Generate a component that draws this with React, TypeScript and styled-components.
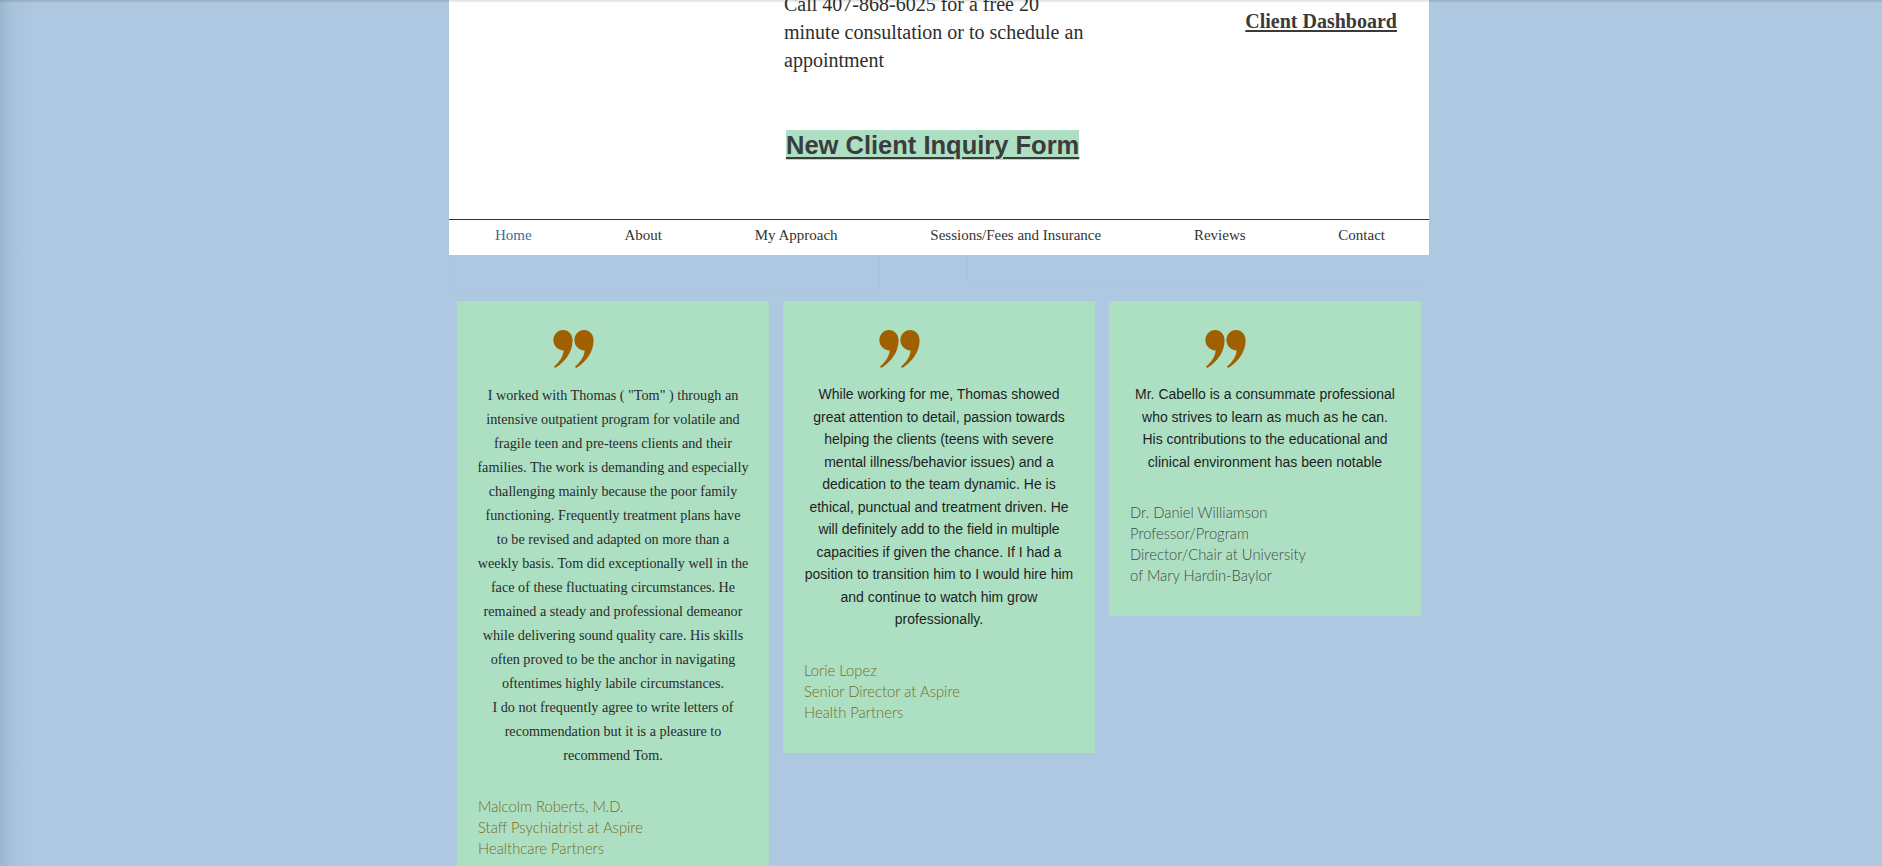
import React from 'react';
import styled, { createGlobalStyle } from 'styled-components';

const GlobalStyle = createGlobalStyle`
    html, body {
        margin: 0;
        padding: 0;
        overflow: hidden;
    }
    body {
        background: #adc8e0;
        font-family: "Liberation Serif", serif;
    }
`;

const navItems = ['Home', 'About', 'My Approach', 'Sessions/Fees and Insurance', 'Reviews', 'Contact'];

type Testimonial = {
    quote: string;
    signature: string;
    serif?: boolean;
    muted?: boolean;
};

const testimonials: Testimonial[] = [
    {
        serif: true,
        quote: `I worked with Thomas ( "Tom" ) through an
intensive outpatient program for volatile and
fragile teen and pre-teens clients and their
families. The work is demanding and especially
challenging mainly because the poor family
functioning. Frequently treatment plans have
to be revised and adapted on more than a
weekly basis. Tom did exceptionally well in the
face of these fluctuating circumstances. He
remained a steady and professional demeanor
while delivering sound quality care. His skills
often proved to be the anchor in navigating
oftentimes highly labile circumstances.
I do not frequently agree to write letters of
recommendation but it is a pleasure to
recommend Tom.`,
        signature: `Malcolm Roberts, M.D.
Staff Psychiatrist at Aspire
Healthcare Partners`,
    },
    {
        quote: `While working for me, Thomas showed
great attention to detail, passion towards
helping the clients (teens with severe
mental illness/behavior issues) and a
dedication to the team dynamic. He is
ethical, punctual and treatment driven. He
will definitely add to the field in multiple
capacities if given the chance. If I had a
position to transition him to I would hire him
and continue to watch him grow
professionally.`,
        signature: `Lorie Lopez
Senior Director at Aspire
Health Partners`,
    },
    {
        muted: true,
        quote: `Mr. Cabello is a consummate professional
who strives to learn as much as he can.
His contributions to the educational and
clinical environment has been notable`,
        signature: `Dr. Daniel Williamson
Professor/Program
Director/Chair at University
of Mary Hardin-Baylor`,
    },
];

const QuoteMark = () => (
    <QuoteSvg viewBox="0 0 41 38" width="41" height="38">
        <path d="M10 0 C15.6 0 19.6 4.4 19.6 10.4 C19.6 21.5 12.5 31.5 2.2 38 L1 36.6 C7 31.4 10.2 26 10.7 20.4 C4.6 20.1 0.4 15.8 0.4 10.2 C0.4 4.5 4.6 0 10 0 Z" />
        <path d="M31 0 C36.6 0 40.6 4.4 40.6 10.4 C40.6 21.5 33.5 31.5 23.2 38 L22 36.6 C28 31.4 31.2 26 31.7 20.4 C25.6 20.1 21.4 15.8 21.4 10.2 C21.4 4.5 25.6 0 31 0 Z" />
    </QuoteSvg>
);

const App = () => {
    return (
        <>
            <GlobalStyle />
            <TopShade />
            <Page>
                <Column>
                    <Header>
                        <HeaderMain>
                            <CallText>
                                Call 407-868-6025 for a free 20 minute consultation or to schedule an appointment
                            </CallText>
                            <InquiryLink href="#">New Client Inquiry Form</InquiryLink>
                        </HeaderMain>
                        <DashboardLink href="#">Client Dashboard</DashboardLink>
                    </Header>
                    <Nav>
                        {navItems.map((item, i) => (
                            <NavLink key={item} href="#" $active={i === 0}>
                                {item}
                            </NavLink>
                        ))}
                    </Nav>
                    <FrameRow>
                        <LeftFrame />
                        <RightFrame />
                    </FrameRow>
                    <Cards>
                        {testimonials.map((t) => (
                            <Card key={t.signature}>
                                <QuoteMark />
                                <QuoteText $serif={t.serif}>{t.quote}</QuoteText>
                                <Signature $muted={t.muted}>{t.signature}</Signature>
                            </Card>
                        ))}
                    </Cards>
                </Column>
            </Page>
        </>
    );
};

const TopShade = styled.div`
    position: fixed;
    top: 0;
    left: 0;
    right: 0;
    height: 3px;
    background: linear-gradient(to bottom, rgba(0, 0, 0, 0.13), rgba(0, 0, 0, 0));
    z-index: 10;
    pointer-events: none;
`;

const Page = styled.div`
    min-height: 100vh;
    padding-right: 4px;
    background: linear-gradient(to right, rgba(60, 90, 120, 0.16) 0, rgba(60, 90, 120, 0.05) 12px, rgba(60, 90, 120, 0) 34px), #adc8e0;
`;

const Column = styled.div`
    width: 980px;
    margin: 0 auto;
`;

const Header = styled.header`
    background: #fff;
    height: 219px;
    display: flex;
    align-items: flex-start;
    padding: 0 32px 0 335px;
    box-sizing: border-box;
`;

const HeaderMain = styled.div`
    display: flex;
    flex-direction: column;
    align-items: flex-start;
    width: 312px;
    margin-top: -10px;
`;

const CallText = styled.p`
    margin: 0;
    font-family: "Liberation Serif", serif;
    font-size: 20px;
    line-height: 28px;
    color: #2e2e2e;
`;

const InquiryLink = styled.a`
    display: inline-block;
    margin: 56px 0 0 2px;
    font-family: "Liberation Sans", Arial, sans-serif;
    font-weight: bold;
    font-size: 25.5px;
    line-height: 30px;
    color: #3c3c3c;
    background: #ade0c3;
    text-decoration: underline;
    text-decoration-thickness: 2px;
    text-underline-offset: 3px;
    white-space: nowrap;
`;

const DashboardLink = styled.a`
    margin: 9px 0 0 auto;
    font-family: "Liberation Serif", serif;
    font-weight: bold;
    font-size: 20px;
    line-height: 24px;
    color: #3a3a3a;
    text-decoration: underline;
    text-underline-offset: 2px;
`;

const Nav = styled.nav`
    background: #fff;
    border-top: 1px solid #333;
    height: 35px;
    display: flex;
    align-items: flex-start;
    justify-content: space-between;
    padding: 0 44px 0 46px;
`;

const NavLink = styled.a<{ $active?: boolean }>`
    font-family: "Liberation Serif", serif;
    font-size: 15px;
    line-height: 31px;
    color: ${({ $active }) => ($active ? '#3c6e9c' : '#333')};
    text-decoration: none;
`;

const FrameRow = styled.div`
    display: flex;
    align-items: flex-start;
    height: 35px;
`;

const LeftFrame = styled.div`
    width: 429px;
    height: 34px;
    border: 1px solid #c3bfb8;
    border-top: none;
`;

const RightFrame = styled.div`
    width: 457px;
    height: 30px;
    margin-left: 87px;
    border-left: 1px solid #c3bfb8;
    border-bottom: 1px solid #c3bfb8;
`;

const Cards = styled.div`
    display: flex;
    align-items: flex-start;
    gap: 14px;
    padding: 0 8px;
    margin-top: 11px;
`;

const Card = styled.div`
    width: 312px;
    flex-shrink: 0;
    background: #ade0c3;
    padding: 29px 0 30px;
    box-sizing: border-box;
    display: flex;
    flex-direction: column;
`;

const QuoteSvg = styled.svg`
    display: block;
    margin-left: 96px;
    fill: #a06000;
`;

const QuoteText = styled.p<{ $serif?: boolean }>`
    margin: 15px 0 0;
    padding: 0 12px;
    text-align: center;
    white-space: pre-line;
    font-family: ${({ $serif }) => ($serif ? '"Liberation Serif", serif' : '"Liberation Sans", Arial, sans-serif')};
    font-size: ${({ $serif }) => ($serif ? '14.2px' : '14px')};
    line-height: ${({ $serif }) => ($serif ? '24px' : '22.5px')};
    color: ${({ $serif }) => ($serif ? '#2b2b2b' : '#1e1e1e')};
`;

const Signature = styled.p<{ $muted?: boolean }>`
    margin: 29px 0 0;
    padding: 0 21px;
    white-space: pre-line;
    font-family: Lato, "Open Sans", sans-serif;
    font-weight: 300;
    font-size: 14.8px;
    line-height: 21px;
    color: ${({ $muted }) => ($muted ? '#474747' : '#7a6a18')};
`;

export default App;
